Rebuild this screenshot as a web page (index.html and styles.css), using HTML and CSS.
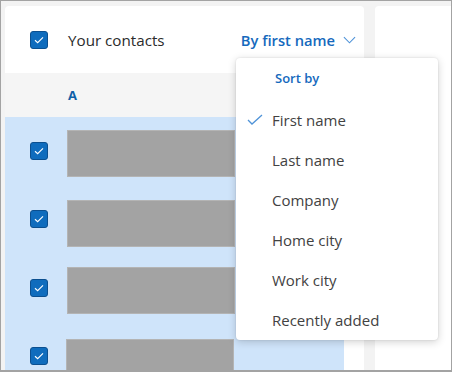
FILE: index.html
```html
<!DOCTYPE html>
<html lang="en">
<head>
    <meta charset="UTF-8">
    <meta name="viewport" content="width=device-width, initial-scale=1.0">
    <title>Your contacts</title>
    <link rel="stylesheet" href="styles.css">
</head>
<body>
    <div class="frame">
        <div class="card">
            <div class="card-header">
                <span class="checkbox"><svg viewBox="0 0 18 18"><path d="M4.5 9.3l3 2.8 6-6" /></svg></span>
                <span class="title">Your contacts</span>
                <button class="sort-btn">By first name
                    <svg class="chevron" viewBox="0 0 14 8"><path d="M1 1l6 6 6-6" /></svg>
                </button>
            </div>
            <div class="letter">A</div>
            <div class="rows">
                <div class="row row-1">
                    <span class="checkbox"><svg viewBox="0 0 18 18"><path d="M4.5 9.3l3 2.8 6-6" /></svg></span>
                    <div class="blur"></div>
                </div>
                <div class="row row-2">
                    <span class="checkbox"><svg viewBox="0 0 18 18"><path d="M4.5 9.3l3 2.8 6-6" /></svg></span>
                    <div class="blur"></div>
                </div>
                <div class="row row-3">
                    <span class="checkbox"><svg viewBox="0 0 18 18"><path d="M4.5 9.3l3 2.8 6-6" /></svg></span>
                    <div class="blur"></div>
                </div>
                <div class="row row-4">
                    <span class="checkbox"><svg viewBox="0 0 18 18"><path d="M4.5 9.3l3 2.8 6-6" /></svg></span>
                    <div class="blur"></div>
                </div>
            </div>
        </div>
        <div class="side"></div>

        <div class="menu">
            <div class="menu-title">Sort by</div>
            <div class="menu-item selected">
                <svg class="tick" viewBox="0 0 16 11"><path d="M1 6l4 4 10-9" /></svg>
                First name
            </div>
            <div class="menu-item">Last name</div>
            <div class="menu-item">Company</div>
            <div class="menu-item">Home city</div>
            <div class="menu-item">Work city</div>
            <div class="menu-item">Recently added</div>
        </div>
    </div>
</body>
</html>
```

FILE: styles.css
```css
body {
    margin: 0;
    padding: 0;
    font-family: "Open Sans", "Noto Sans", Arial, sans-serif;
    background-color: #ffffff;
}
.frame {
    position: relative;
    width: 452px;
    height: 372px;
    box-sizing: border-box;
    border: 1px solid #a3a3a3;
    border-bottom-width: 2px;
    background-color: #f3f3f3;
    padding: 5px 0 0 4px;
    display: flex;
    gap: 11px;
    overflow: hidden;
}
.card {
    width: 359px;
    flex-shrink: 0;
    background-color: #ffffff;
    border-radius: 4px 4px 0 0;
    overflow: hidden;
}
.side {
    flex: 1;
    background-color: #ffffff;
    border-radius: 4px 0 0 0;
}
.card-header {
    height: 67px;
    display: flex;
    align-items: center;
    padding-left: 25px;
}
.checkbox {
    width: 18px;
    height: 18px;
    box-sizing: border-box;
    border: 1px solid #0b4f8f;
    border-radius: 3px;
    background-color: #0f6cbd;
    display: inline-flex;
    flex-shrink: 0;
}
.checkbox svg {
    width: 16px;
    height: 16px;
    fill: none;
    stroke: #ffffff;
    stroke-width: 1.3;
}
.title {
    margin-left: 20px;
    font-size: 15.2px;
    color: #2b2b2b;
}
.sort-btn {
    margin-left: auto;
    margin-right: 8px;
    border: none;
    background: none;
    padding: 0;
    font-family: inherit;
    font-size: 14.7px;
    font-weight: 600;
    color: #1569bd;
    display: flex;
    align-items: center;
    gap: 8px;
}
.chevron {
    width: 13px;
    height: 8px;
    fill: none;
    stroke: #4f93d8;
    stroke-width: 1.2;
}
.letter {
    height: 44px;
    box-sizing: border-box;
    background-color: #f5f5f5;
    padding: 13px 0 0 63px;
    font-size: 13px;
    font-weight: 700;
    color: #0f5fa8;
}
.rows {
    width: 339px;
    background-color: #cfe4fa;
    height: 260px;
}
.row {
    height: 70px;
    display: flex;
    align-items: flex-start;
    padding-left: 25px;
    box-sizing: border-box;
}
.row-1 { padding-top: 13px; }
.row-2 { padding-top: 13px; height: 67px; }
.row-3 { padding-top: 13px; height: 72px; }
.row-4 { padding-top: 13px; }
.row .checkbox {
    margin-top: 12px;
}
.row-2 .checkbox { margin-top: 10px; }
.row-4 .checkbox { margin-top: 8px; }
.blur {
    margin-left: 19px;
    width: 168px;
    height: 47px;
    box-sizing: border-box;
    background-color: #a3a3a3;
    border: 1px solid #b4b4b4;
}
.row-4 .blur {
    margin-left: 18px;
}
.menu {
    position: absolute;
    left: 235px;
    top: 57px;
    width: 202px;
    height: 282px;
    background-color: #ffffff;
    border-radius: 4px;
    box-shadow: 0 2px 8px rgba(0, 0, 0, 0.18), 0 0 2px rgba(0, 0, 0, 0.12);
}
.menu-title {
    height: 42px;
    box-sizing: border-box;
    padding: 11px 0 0 39px;
    font-size: 13px;
    font-weight: 600;
    color: #1569bd;
}
.menu-item {
    position: relative;
    height: 40px;
    display: flex;
    align-items: center;
    padding-left: 36px;
    font-size: 15px;
    color: #424242;
}
.tick {
    position: absolute;
    left: 11px;
    top: 14px;
    width: 16px;
    height: 11px;
    fill: none;
    stroke: #4f93d8;
    stroke-width: 1.3;
}
```
